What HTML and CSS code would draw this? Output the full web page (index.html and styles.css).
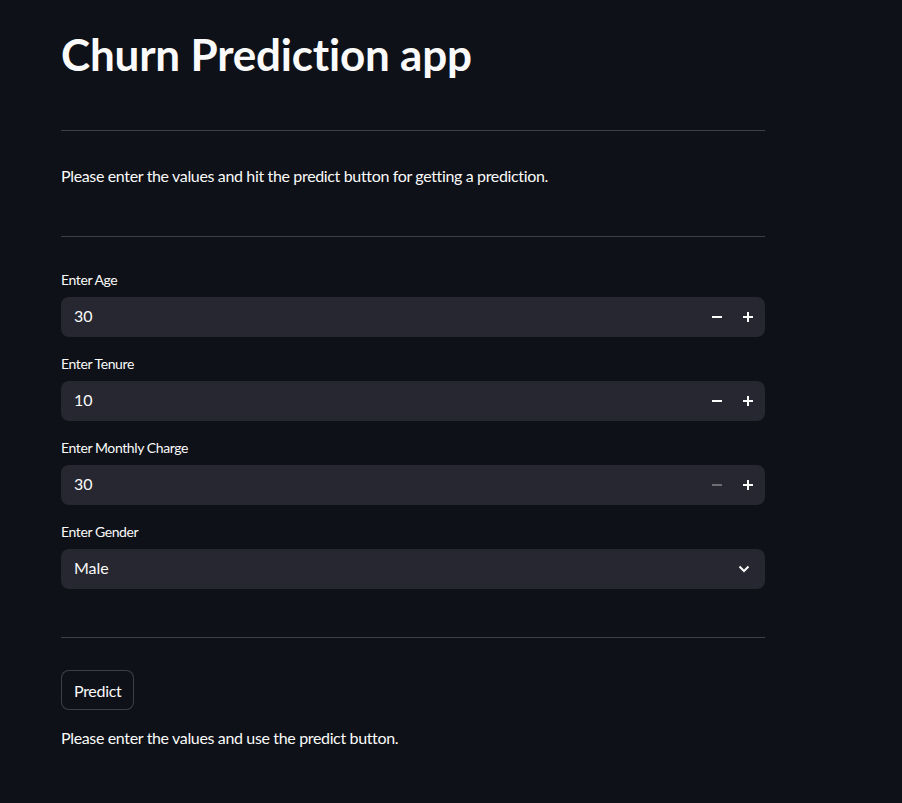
FILE: index.html
```html
<!DOCTYPE html>
<html>
<head>
<meta charset="utf-8">
<link rel="stylesheet" href="styles.css">
</head>
<body>
<main class="main">
  <h1 class="title">Churn Prediction app</h1>
  <hr class="rule rule-1">
  <p class="intro">Please enter the values and hit the predict button for getting a prediction.</p>
  <hr class="rule rule-2">
  <div class="fields">
    <div class="field">
      <label class="label">Enter Age</label>
      <div class="box">
        <span class="value">30</span>
        <span class="step minus"></span>
        <span class="step plus"></span>
      </div>
    </div>
    <div class="field">
      <label class="label">Enter Tenure</label>
      <div class="box">
        <span class="value">10</span>
        <span class="step minus"></span>
        <span class="step plus"></span>
      </div>
    </div>
    <div class="field">
      <label class="label">Enter Monthly Charge</label>
      <div class="box">
        <span class="value">30</span>
        <span class="step minus disabled"></span>
        <span class="step plus"></span>
      </div>
    </div>
    <div class="field">
      <label class="label">Enter Gender</label>
      <div class="box">
        <span class="value">Male</span>
        <svg class="chev" width="12" height="8" viewBox="0 0 12 8"><path d="M1.5 1.5 L6 6 L10.5 1.5" fill="none" stroke="#fafafa" stroke-width="2"/></svg>
      </div>
    </div>
  </div>
  <hr class="rule rule-3">
  <button class="btn">Predict</button>
  <p class="outro">Please enter the values and use the predict button.</p>
</main>
</body>
</html>
```
FILE: styles.css
```css
html, body {
  margin: 0;
  padding: 0;
  background: #0e1117;
  color: #fafafa;
  font-family: "Lato", "Noto Sans", sans-serif;
  font-variant-ligatures: none;
}
.main {
  width: 704px;
  margin-left: 61px;
  display: flex;
  flex-direction: column;
}
.title {
  margin: 0;
  padding-top: 26px;
  font-size: 44px;
  line-height: 56px;
  font-weight: 700;
  height: 56px;
  letter-spacing: -0.2px;
}
.rule {
  border: none;
  border-top: 1px solid rgba(250, 250, 250, 0.2);
  margin: 0;
  width: 100%;
}
.rule-1 { margin-top: 48px; }
.intro {
  margin: 33px 0 0 0;
  font-size: 16px;
  line-height: 24px;
  letter-spacing: -0.35px;
}
.rule-2 { margin-top: 48px; }
.fields {
  display: flex;
  flex-direction: column;
  margin-top: 33px;
  gap: 17px;
}
.field {
  display: flex;
  flex-direction: column;
  gap: 7px;
}
.label {
  font-size: 14px;
  line-height: 20px;
  height: 20px;
  letter-spacing: -0.4px;
}
.box {
  height: 40px;
  background: #262730;
  border-radius: 8px;
  display: flex;
  align-items: center;
  padding: 0 13px;
}
.value {
  flex: 1;
  font-size: 16px;
  line-height: 20px;
  margin-top: -2px;
}
.step {
  width: 32px;
  height: 40px;
  position: relative;
}
.step::before, .plus::after {
  content: "";
  position: absolute;
  background: #fafafa;
  left: 12px;
  top: 19px;
  width: 10px;
  height: 2px;
}
.plus::after {
  left: 16px;
  top: 15px;
  width: 2px;
  height: 10px;
}
.minus { margin-right: -1px; }
.plus { margin-right: -11px; }
.disabled::before { background: #6c6e76; }
.chev { margin-right: 2px; }
.rule-3 { margin-top: 48px; }
.btn {
  align-self: flex-start;
  margin-top: 32px;
  height: 40px;
  padding: 0 12px;
  background: #0e1117;
  color: #fafafa;
  border: 1px solid rgba(250, 250, 250, 0.2);
  border-radius: 8px;
  font-family: inherit;
  font-size: 16px;
  letter-spacing: -0.3px;
}
.outro {
  margin: 16px 0 0 0;
  font-size: 16px;
  line-height: 24px;
  letter-spacing: -0.35px;
}
```
